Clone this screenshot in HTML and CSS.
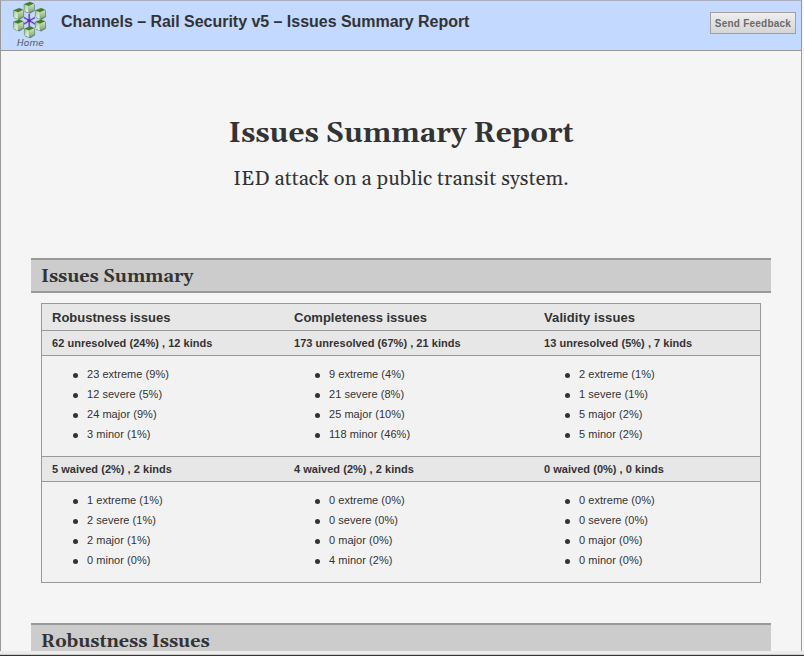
FILE: index.html
```html
<!DOCTYPE html>
<html lang="en">
<head>
<meta charset="utf-8">
<title>Issues Summary Report</title>
<link rel="stylesheet" href="styles.css">
</head>
<body>
<div class="window">
  <header class="topbar">
    <a class="home">
      <svg class="logo" width="36" height="38" viewBox="0 0 36 38">
        <defs>
          <linearGradient id="left" x1="0" y1="0" x2="1" y2="1"><stop offset="0" stop-color="#9cc58b"/><stop offset="1" stop-color="#f2faee"/></linearGradient>
          <linearGradient id="right" x1="0" y1="0" x2="0" y2="1"><stop offset="0" stop-color="#cfe3c6"/><stop offset="1" stop-color="#79a968"/></linearGradient>
          <g id="cube">
            <path d="M-4 -3L1.2 -4.6L5.8 -2.8V3.4L1 6.4L-4.2 4.6Z" fill="#40503f" opacity=".65"/>
            <path d="M-4.9 -3L1 -5.2L5 -3.5L-.4 -1.2Z" fill="#437f24"/>
            <path d="M-4.9 -3L-.4 -1.2V5.4L-4.9 3.4Z" fill="url(#left)"/>
            <path d="M-.4 -1.2L5 -3.5V2.7L-.4 5.4Z" fill="url(#right)"/>
            <path d="M-4.9 3.4V-3L1 -5.2L5 -3.5" fill="none" stroke="#3c7326" stroke-width=".5"/>
          </g>
        </defs>
        <path d="M18.2 13V26M13 16.5L24 23M13 23L24 16.5" stroke="#a5a2df" stroke-width="2.2"/>
        <path d="M18.2 13V26M13 16.5L24 23M13 23L24 16.5" stroke="#5535ae" stroke-width="1"/>
        <circle cx="18.2" cy="19.6" r="1.7" fill="#5b2bad"/>
        <use href="#cube" x="18" y="6.3"/><use href="#cube" x="7.3" y="12.5"/><use href="#cube" x="29.2" y="12.5"/>
        <use href="#cube" x="7.3" y="24"/><use href="#cube" x="29.2" y="24"/><use href="#cube" x="18.3" y="30.8"/>
      </svg>
      <span class="home-label">Home</span>
    </a>
    <div class="page-title">Channels – Rail Security v5 – Issues Summary Report</div>
    <button class="feedback">Send Feedback</button>
  </header>
  <main class="report">
    <h1>Issues Summary Report</h1>
    <p class="subtitle">IED attack on a public transit system.</p>
    <h2 class="section">Issues Summary</h2>
    <div class="summary">
      <div class="row names"><b>Robustness issues</b><b>Completeness issues</b><b class="validity">Validity issues</b></div>
      <div class="row counts"><b>62 unresolved (24%) , 12 kinds</b><b>173 unresolved (67%) , 21 kinds</b><b>13 unresolved (5%) , 7 kinds</b></div>
      <div class="row lists">
        <ul><li>23 extreme (9%)</li><li>12 severe (5%)</li><li>24 major (9%)</li><li>3 minor (1%)</li></ul>
        <ul><li>9 extreme (4%)</li><li>21 severe (8%)</li><li>25 major (10%)</li><li>118 minor (46%)</li></ul>
        <ul><li>2 extreme (1%)</li><li>1 severe (1%)</li><li>5 major (2%)</li><li>5 minor (2%)</li></ul>
      </div>
      <div class="row counts"><b>5 waived (2%) , 2 kinds</b><b>4 waived (2%) , 2 kinds</b><b>0 waived (0%) , 0 kinds</b></div>
      <div class="row lists">
        <ul><li>1 extreme (1%)</li><li>2 severe (1%)</li><li>2 major (1%)</li><li>0 minor (0%)</li></ul>
        <ul><li>0 extreme (0%)</li><li>0 severe (0%)</li><li>0 major (0%)</li><li>4 minor (2%)</li></ul>
        <ul><li>0 extreme (0%)</li><li>0 severe (0%)</li><li>0 major (0%)</li><li>0 minor (0%)</li></ul>
      </div>
    </div>
    <h2 class="section">Robustness Issues</h2>
  </main>
</div>
<div class="status"></div>
</body>
</html>
```

FILE: styles.css
```css
* { box-sizing: border-box; }
body {
  margin: 0;
  height: 656px;
  overflow: hidden;
  background: #f8f8f8;
  color: #333;
  font-family: "Liberation Sans", Arial, sans-serif;
}
.window {
  width: 802px;
  height: 651px;
  overflow: hidden;
  border: 1px solid #999;
  border-top-color: #a9adbd;
  border-bottom: 0;
  background: #f5f5f5;
}
.topbar {
  display: flex;
  height: 50px;
  background: #c3d9ff;
  border-bottom: 1px solid #999;
}
.home {
  width: 60px;
  padding-left: 10px;
  display: flex;
  flex-direction: column;
}
.logo { display: block; }
.home-label {
  margin-left: 6px;
  font: italic 9px/8px "DejaVu Sans", sans-serif;
  letter-spacing: .1px;
  color: #555;
}
.page-title {
  flex: 1;
  padding-top: 12px;
  font-size: 16px;
  font-weight: bold;
  line-height: 18px;
  letter-spacing: -.03px;
  white-space: nowrap;
}
.feedback {
  width: 86px;
  height: 22px;
  margin: 11px 5px 0 0;
  padding: 0;
  border: 1px solid #a0a0a0;
  background: linear-gradient(#eee, #d5d5d5);
  color: #6a6a6a;
  font: bold 10px "Liberation Sans", Arial, sans-serif;
  letter-spacing: .23px;
}
.report { padding: 0 30px; }
h1, h2, .subtitle { font-family: Georgia, Gelasio, "DejaVu Serif", serif; }
h1 {
  margin: 65px 0 0;
  font-size: 28px;
  line-height: 36px;
  letter-spacing: -.04px;
  text-align: center;
}
.subtitle {
  margin: 14px 0 65px;
  font-size: 20px;
  line-height: 27px;
  letter-spacing: .11px;
  text-align: center;
}
.section {
  height: 35px;
  margin: 0;
  padding-left: 10px;
  border: solid #999;
  border-width: 2px 0;
  background: #ccc;
  font-size: 18px;
  line-height: 33px;
  letter-spacing: -.08px;
}
.summary {
  width: 720px;
  margin: 10px 0 40px 10px;
  border: 1px solid #999;
}
.row {
  display: grid;
  grid-template-columns: 242px 250px 1fr;
  padding-left: 10px;
  border-bottom: 1px solid #999;
  background: #e7e7e7;
}
.row:last-child { border-bottom: 0; }
.names { height: 27px; font-size: 13px; line-height: 27px; }
.validity { letter-spacing: .1px; }
.counts { height: 25px; font-size: 11px; line-height: 24px; letter-spacing: .03px; }
.lists { height: 101px; background: #f2f2f2; font-size: 11px; line-height: 20px; letter-spacing: .04px; }
.lists:last-child { height: 100px; }
ul { margin: 0; padding: 8px 0 0 20px; list-style: none; }
li { display: flex; align-items: center; gap: 9.5px; height: 20px; }
li::before { content: ""; width: 5px; height: 5px; margin: 2px 0 0 .5px; border-radius: 50%; background: #333; }
.status {
  height: 5px;
  background: linear-gradient(#ececea 0 3px, #ccc 3px 4px, #333 4px 5px);
}
```
